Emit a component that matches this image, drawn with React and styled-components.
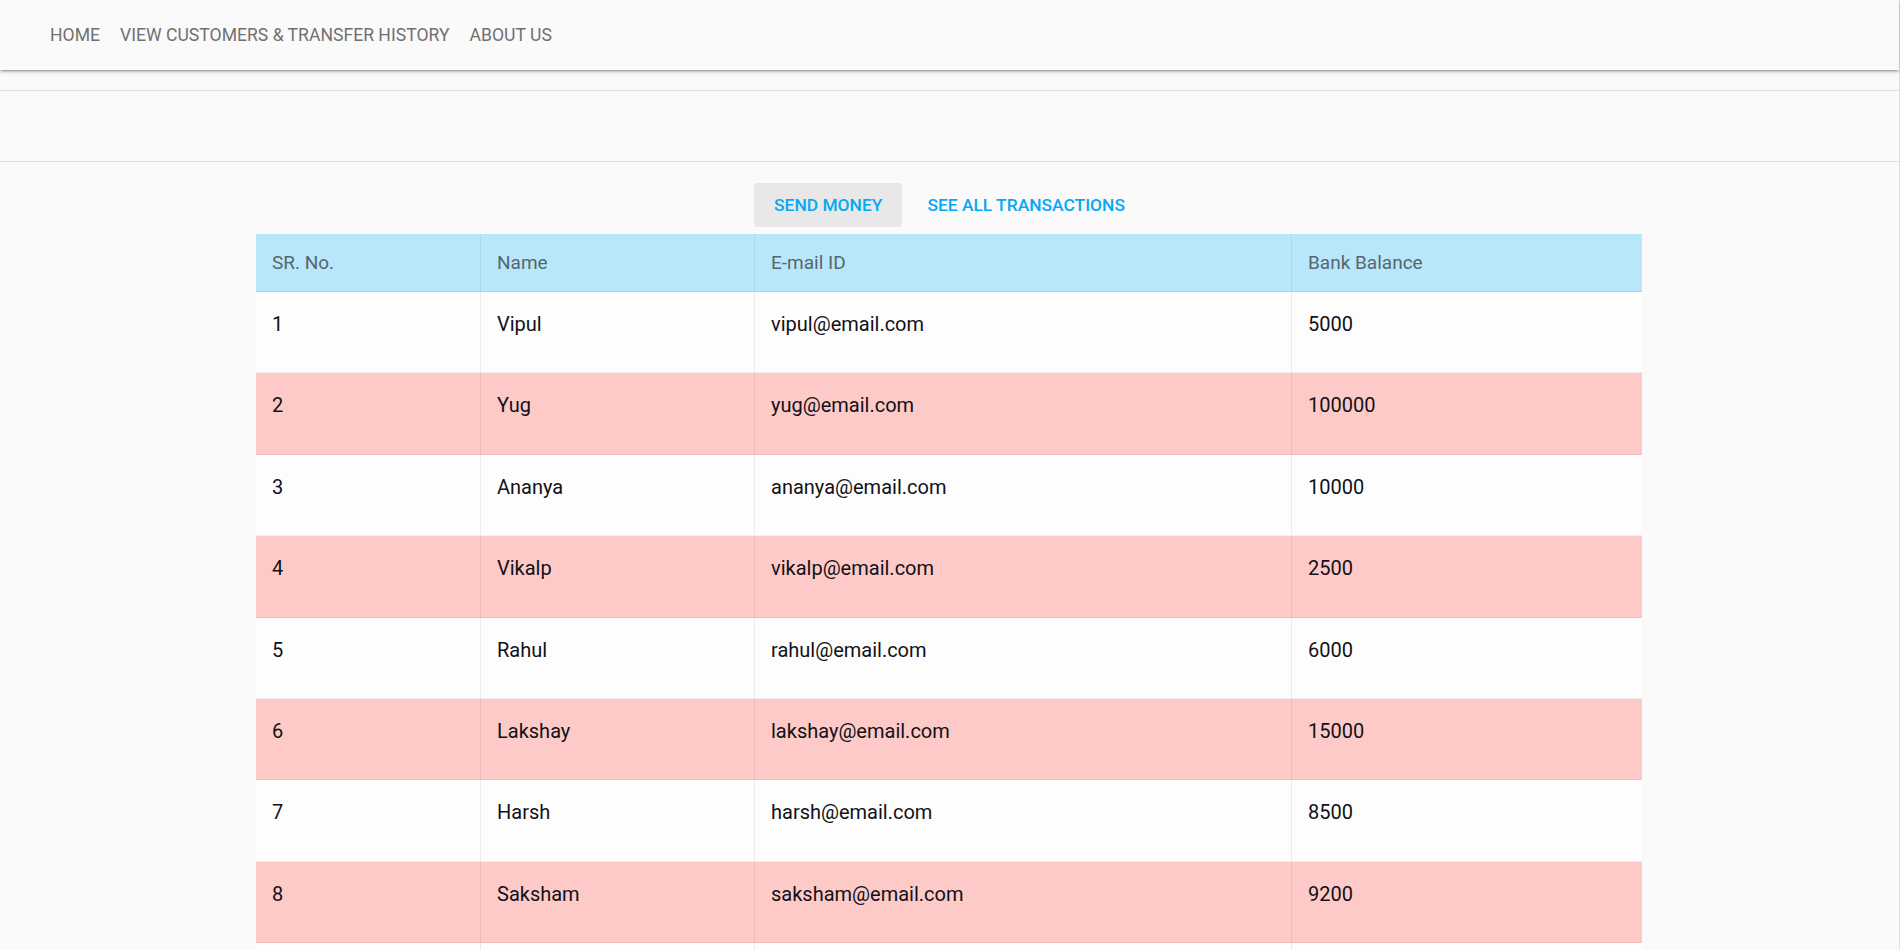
import React from 'react';
import styled, { createGlobalStyle } from 'styled-components';

const GlobalStyle = createGlobalStyle`
  html, body {
    margin: 0;
    padding: 0;
    background: #fafafa;
  }
  body {
    font-family: Roboto, "Noto Sans", "Liberation Sans", sans-serif;
    -webkit-font-smoothing: antialiased;
  }
`;

const Page = styled.div`
  min-height: 950px;
  box-sizing: border-box;
  border-right: 1px solid #e2e2e2;
  background: #fafafa;
`;

const NavBar = styled.nav`
  height: 70px;
  background: #fafafa;
  box-shadow: 0 2px 2px 0 rgba(0, 0, 0, 0.14), 0 3px 1px -2px rgba(0, 0, 0, 0.12),
    0 1px 5px 0 rgba(0, 0, 0, 0.2);
  display: flex;
  align-items: center;
  padding-left: 40px;
  position: relative;
  z-index: 1;
`;

const NavList = styled.ul`
  display: flex;
  list-style: none;
  margin: 0;
  padding: 0;
`;

const NavLink = styled.a`
  display: block;
  padding: 0 10px;
  font-size: 17.6px;
  line-height: 70px;
  color: #707070;
  text-decoration: none;
  text-transform: uppercase;
  cursor: pointer;
`;

const Gap = styled.div`
  height: 20px;
`;

const SubBar = styled.div`
  height: 72px;
  box-sizing: border-box;
  border-top: 1px solid #e0e0e0;
  border-bottom: 1px solid #e0e0e0;
`;

const Actions = styled.div`
  display: flex;
  justify-content: center;
  gap: 5px;
  margin: 21px 0 7px;
`;

const FlatButton = styled.button`
  height: 44px;
  padding: 0 20px;
  border: none;
  border-radius: 3px;
  background: ${(p) => (p.$active ? '#e8e8e8' : 'transparent')};
  color: #03a9f4;
  font-family: Roboto, "Noto Sans", sans-serif;
  font-size: 17.4px;
  font-weight: 500;
  text-transform: uppercase;
  cursor: pointer;
`;

const Table = styled.table`
  width: 1386px;
  margin: 0 0 0 256px;
  table-layout: fixed;
  border-collapse: separate;
  border-spacing: 0;
`;

const HeadCell = styled.th`
  height: 58px;
  box-sizing: border-box;
  padding: 0 16px;
  background: #b8e6fa;
  border-bottom: 1px solid #a3d7ef;
  border-right: 1px solid rgba(0, 0, 0, 0.06);
  text-align: left;
  vertical-align: middle;
  font-size: 19px;
  font-weight: 400;
  color: #56666e;
  &:last-child {
    border-right: none;
  }
`;

const Row = styled.tr`
  background: ${(p) => (p.$pink ? '#fdcac7' : '#fdfdfd')};
`;

const Cell = styled.td`
  height: 81.4px;
  box-sizing: border-box;
  padding: 21px 16px 0;
  vertical-align: top;
  font-size: 20px;
  line-height: 22px;
  font-weight: 400;
  color: #111118;
  border-bottom: 1px solid rgba(0, 0, 0, 0.06);
  border-right: 1px solid rgba(0, 0, 0, 0.07);
  &:last-child {
    border-right: none;
  }
`;

const customers = [
  { id: 1, name: 'Vipul', email: 'vipul@email.com', balance: 5000 },
  { id: 2, name: 'Yug', email: 'yug@email.com', balance: 100000 },
  { id: 3, name: 'Ananya', email: 'ananya@email.com', balance: 10000 },
  { id: 4, name: 'Vikalp', email: 'vikalp@email.com', balance: 2500 },
  { id: 5, name: 'Rahul', email: 'rahul@email.com', balance: 6000 },
  { id: 6, name: 'Lakshay', email: 'lakshay@email.com', balance: 15000 },
  { id: 7, name: 'Harsh', email: 'harsh@email.com', balance: 8500 },
  { id: 8, name: 'Saksham', email: 'saksham@email.com', balance: 9200 },
  { id: 9, name: 'Aditi', email: 'aditi@email.com', balance: 7000 },
  { id: 10, name: 'Karan', email: 'karan@email.com', balance: 12000 },
];

export default function App() {
  return (
    <Page>
      <GlobalStyle />
      <NavBar>
        <NavList>
          <li><NavLink>Home</NavLink></li>
          <li><NavLink>View Customers &amp; Transfer History</NavLink></li>
          <li><NavLink>About Us</NavLink></li>
        </NavList>
      </NavBar>
      <Gap />
      <SubBar />
      <Actions>
        <FlatButton $active>Send Money</FlatButton>
        <FlatButton>See All Transactions</FlatButton>
      </Actions>
      <Table>
        <colgroup>
          <col style={{ width: 225 }} />
          <col style={{ width: 274 }} />
          <col style={{ width: 537 }} />
          <col style={{ width: 350 }} />
        </colgroup>
        <thead>
          <tr>
            <HeadCell>SR. No.</HeadCell>
            <HeadCell>Name</HeadCell>
            <HeadCell>E-mail ID</HeadCell>
            <HeadCell>Bank Balance</HeadCell>
          </tr>
        </thead>
        <tbody>
          {customers.map((c, i) => (
            <Row key={c.id} $pink={i % 2 === 1}>
              <Cell>{c.id}</Cell>
              <Cell>{c.name}</Cell>
              <Cell>{c.email}</Cell>
              <Cell>{c.balance}</Cell>
            </Row>
          ))}
        </tbody>
      </Table>
    </Page>
  );
}
